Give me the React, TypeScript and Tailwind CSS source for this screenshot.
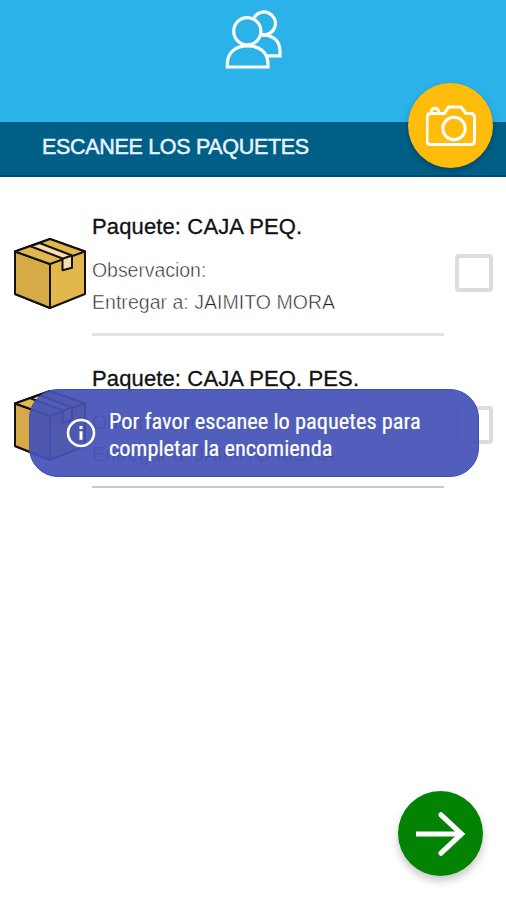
import { useState } from 'react';

interface Package {
  id: number;
  name: string;
  note: string;
  recipient: string;
  dividerClass: string;
}

const packages: Package[] = [
  { id: 1, name: 'CAJA PEQ.', note: '', recipient: 'JAIMITO MORA', dividerClass: 'h-[3px] bg-[#e2e2e2]' },
  { id: 2, name: 'CAJA PEQ. PES.', note: '', recipient: 'JAIMITO MORA', dividerClass: 'mt-px h-[2px] bg-[#c9c9c9]' },
];

const UsersIcon = () => (
  <svg width="58" height="60" viewBox="0 0 58 60" fill="none" stroke="white" strokeWidth="3.2">
    <circle cx="22.3" cy="21.3" r="13.6" />
    <path d="M2.3 57V54C2.3 42.5 10.5 35.8 22.5 35.8S43 42.5 43 54v3z" />
    <path d="M29.2 7.6A11.4 11.4 0 1 1 37 24.6" />
    <path d="M36 24.8C48.5 24.5 55 31 55 41.5v4.3H42" />
  </svg>
);

const CameraIcon = () => (
  <svg width="50" height="44" viewBox="0 0 50 44" fill="none" stroke="white" strokeWidth="3" strokeLinejoin="round">
    <path d="M5 9.5h13.5l4-6.5H35l5 6.5h4.5q4 0 4 4v23q0 4-4 4h-40q-3.5 0-3.5-4v-23q0-4 4-4z" />
    <circle cx="28" cy="24.5" r="11.2" />
    <path d="M5.5 9.5a3.8 3.8 0 1 1 7 0" />
  </svg>
);

const BoxIcon = () => (
  <svg className="shrink-0" width="72" height="72" viewBox="0 0 72 72" fill="none" stroke="#111" strokeWidth="2" strokeLinejoin="round">
    <path d="M1 13.5 36 1l35 12.5V56L36 70 1 56z" fill="#e2b84c" />
    <path d="M1 13.5 36 26v44L1 56z" fill="#d6aa46" />
    <path d="M1 13.5 36 1l35 12.5L36 26z" fill="#e2b84c" />
    <path d="M16.5 8.2 25.5 5 58 17.5v12.2l-9.5 2.5V20.5z" fill="#f9dfad" />
    <path d="M48.5 20.8 58 17.5" />
  </svg>
);

const InfoIcon = () => (
  <svg className="shrink-0" width="30" height="30" viewBox="0 0 30 30" fill="none" stroke="white" strokeWidth="2.6">
    <circle cx="15" cy="15" r="13" />
    <path d="M15 13.2v8.5M15 8v3" strokeWidth="3" />
  </svg>
);

const ArrowIcon = () => (
  <svg width="50" height="46" viewBox="0 0 50 46" fill="none" stroke="white" strokeWidth="5.2">
    <path d="M0 23h44" />
    <path d="M25 3.8 45.5 23 25 42.2" strokeLinecap="round" strokeLinejoin="miter" />
  </svg>
);

interface PackageRowProps {
  item: Package;
  checked: boolean;
  onToggle: () => void;
}

const PackageRow = ({ item, checked, onToggle }: PackageRowProps) => (
  <li className="flex h-[152px] pl-[14px]">
    <div className="w-[78px] pt-[28px]">
      <BoxIcon />
    </div>
    <div className="w-[352px] whitespace-nowrap">
      <p className="pt-px text-[22px] leading-8 tracking-[0.13px] text-[#111] [-webkit-text-stroke:0.3px_#111]">
        Paquete: {item.name}
      </p>
      <div className="mt-[11px] text-[19.5px] leading-8 text-[#222] [-webkit-text-stroke:0.5px_white]">
        <p className="-tracking-[0.05px]">Observacion: {item.note}</p>
        <p className="tracking-[0.03px]">Entregar a: {item.recipient}</p>
      </div>
      <div className="pt-[15px]">
        <div className={item.dividerClass} />
      </div>
    </div>
    <button
      role="checkbox"
      aria-checked={checked}
      aria-label={item.name}
      onClick={onToggle}
      className="ml-[11px] mt-[44px] size-[38px] shrink-0 rounded-[4px] border-4 border-[#dcdcdc]"
    />
  </li>
);

const App = () => {
  const [scanned, setScanned] = useState<number[]>([]);

  const toggle = (id: number) => {
    setScanned((prev) => (prev.includes(id) ? prev.filter((p) => p !== id) : [...prev, id]));
  };

  return (
    <div className="relative h-[900px] w-[506px] overflow-hidden bg-white font-['Liberation_Sans',Arial,sans-serif]">
      <header className="flex h-[122px] justify-center bg-[#2bb2e9] pt-[10px] pl-[2px]">
        <UsersIcon />
      </header>
      <div className="flex h-[55px] items-center border-b-2 border-[#004a78] bg-[#005f87] pl-[42px]">
        <h1 className="whitespace-nowrap pb-[3px] text-[21.5px] tracking-[-0.32px] text-[#e8f2fc] [-webkit-text-stroke:0.5px_#e8f2fc]">
          ESCANEE LOS PAQUETES
        </h1>
      </div>

      <ul className="pt-[33px]">
        {packages.map((item) => (
          <PackageRow
            key={item.id}
            item={item}
            checked={scanned.includes(item.id)}
            onToggle={() => toggle(item.id)}
          />
        ))}
      </ul>

      {/* Scan button */}
      <button
        aria-label="Escanear"
        className="absolute left-[408px] top-[83px] flex size-[85px] items-center justify-center rounded-full bg-[#ffbc0b] shadow-[0_3px_6px_rgba(0,0,0,0.25)]"
      >
        <CameraIcon />
      </button>

      {/* Toast */}
      <div
        role="status"
        className="absolute left-[29px] top-[389px] flex h-[88px] w-[450px] items-center rounded-[29px] border border-[#3f4fb5] bg-[#4452b6]/93 pl-[36px]"
      >
        <InfoIcon />
        <p className="ml-[13px] whitespace-nowrap pt-[3px] font-['Roboto_Condensed',Roboto,sans-serif] text-[22.4px] leading-[27px] text-white [-webkit-text-stroke:0.2px_white]">
          Por favor escanee lo paquetes para
          <br />
          completar la encomienda
        </p>
      </div>

      {/* Next button */}
      <button
        aria-label="Siguiente"
        className="absolute left-[398px] top-[791px] flex size-[85px] items-center justify-center rounded-full bg-[#048204] shadow-[0_5px_8px_rgba(0,0,0,0.22)]"
      >
        <ArrowIcon />
      </button>
    </div>
  );
};

export default App;
